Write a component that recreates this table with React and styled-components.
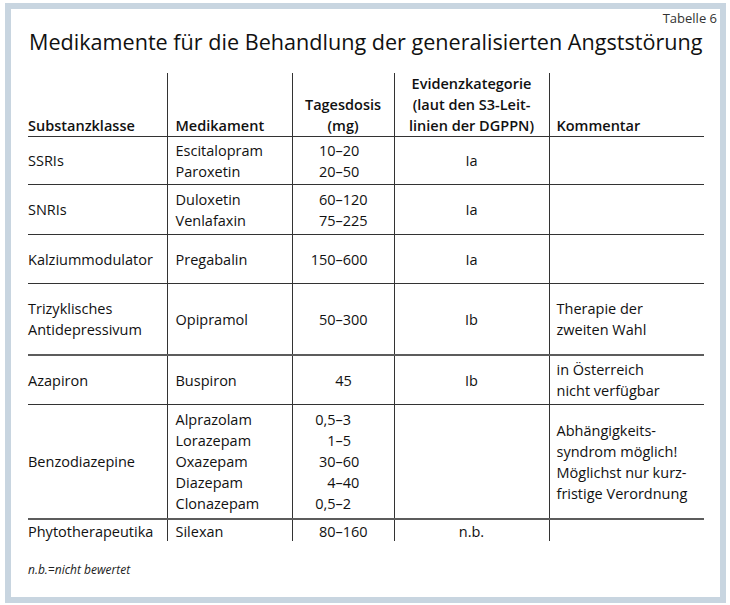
import React from "react"
import styled, { createGlobalStyle } from "styled-components"

const GlobalStyle = createGlobalStyle`
    html, body {
        margin: 0;
        padding: 0;
        background: #fff;
    }
    body {
        font-family: "Open Sans", "Noto Sans", sans-serif;
        color: #111;
    }
`

const Frame = styled.div`
    box-sizing: border-box;
    width: 721px;
    height: 600px;
    margin: 3px 4px 2px 5px;
    border: 6px solid #c8d5e0;
    padding: 1px 3px 0 17px;
    display: flex;
    flex-direction: column;
`

const Caption = styled.div`
    align-self: flex-end;
    font-size: 13px;
    line-height: 16px;
    color: #333;
`

const Title = styled.h1`
    margin: 5px 0 0 1px;
    font-size: 21.6px;
    line-height: 22px;
    font-weight: 400;
    color: #111;
`

const Table = styled.table`
    margin-top: 20px;
    width: 676px;
    border-collapse: collapse;
    table-layout: fixed;
    font-size: 14.5px;
`

const Col = styled.col`
    width: ${p => p.w}px;
`

const Th = styled.th`
    box-sizing: border-box;
    height: 63px;
    padding: 0 0 0 ${p => p.pad || 0}px;
    vertical-align: bottom;
    text-align: ${p => p.center ? "center" : "left"};
    font-weight: 600;
    line-height: 21px;
    border-left: ${p => p.first ? "none" : "1px solid #333"};
`

const Row = styled.tr`
    border-top: ${p => p.thick ? "2px solid #5c5c5c" : "1px solid #333"};
`

const Td = styled.td`
    height: ${p => p.h}px;
    padding: ${p => p.top ? "3px" : "0"} 0 0 ${p => p.pad || 0}px;
    vertical-align: ${p => p.top ? "top" : "middle"};
    text-align: ${p => p.center ? "center" : "left"};
    line-height: ${p => p.top ? 18 : 21}px;
    border-left: ${p => p.first ? "none" : "1px solid #333"};
`

const Line = styled.div`
    white-space: nowrap;
    text-align: ${p => p.center ? "center" : "inherit"};
`

const DoseLine = styled.div`
    display: grid;
    grid-template-columns: 42px auto 1fr;
    white-space: nowrap;
`

const Low = styled.span`
    text-align: right;
`

const Footnote = styled.div`
    margin-top: 21px;
    font-size: 12px;
    line-height: 16px;
    font-style: italic;
    color: #222;
`

const rows = [
    { cls: ["SSRIs"], meds: ["Escitalopram", "Paroxetin"], dose: [["10", "20"], ["20", "50"]], ev: "Ia", com: [], h: 47 },
    { cls: ["SNRIs"], meds: ["Duloxetin", "Venlafaxin"], dose: [["60", "120"], ["75", "225"]], ev: "Ia", com: [], h: 49 },
    { cls: ["Kalziummodulator"], meds: ["Pregabalin"], dose: [["150", "600"]], ev: "Ia", com: [], h: 48 },
    { cls: ["Trizyklisches", "Antidepressivum"], meds: ["Opipramol"], dose: [["50", "300"]], ev: "Ib", com: ["Therapie der", "zweiten Wahl"], h: 70 },
    { cls: ["Azapiron"], meds: ["Buspiron"], dose: "45", ev: "Ib", com: ["in Österreich", "nicht verfügbar"], h: 48, thick: true },
    {
        cls: ["Benzodiazepine"],
        meds: ["Alprazolam", "Lorazepam", "Oxazepam", "Diazepam", "Clonazepam"],
        dose: [["0,5", "3"], ["1", "5"], ["30", "60"], ["4", "40"], ["0,5", "2"]],
        ev: "",
        com: ["Abhängigkeits-", "syndrom möglich!", "Möglichst nur kurz-", "fristige Verordnung"],
        h: 113
    },
    { cls: ["Phytotherapeutika"], meds: ["Silexan"], dose: [["80", "160"]], ev: "n.b.", com: [], h: 18, thick: true, top: true },
]

const Lines = ({ items }) => items.map(t => <Line key={t}>{t}</Line>)

const Dose = ({ dose }) =>
    typeof dose === "string"
        ? <Line center>{dose}</Line>
        : dose.map(([lo, hi], i) =>
            <DoseLine key={i}>
                <Low>{lo}</Low>
                <span>–</span>
                <span>{hi}</span>
            </DoseLine>
        )

const App = () =>
    <>
        <GlobalStyle />
        <Frame>
            <Caption>Tabelle 6</Caption>
            <Title>Medikamente für die Behandlung der generalisierten Angststörung</Title>
            <Table>
                <colgroup>
                    <Col w={139} />
                    <Col w={125} />
                    <Col w={102} />
                    <Col w={155} />
                    <Col w={155} />
                </colgroup>
                <thead>
                    <tr>
                        <Th first>Substanzklasse</Th>
                        <Th pad={8}>Medikament</Th>
                        <Th center>Tagesdosis<br />(mg)</Th>
                        <Th center>Evidenzkategorie<br />(laut den S3-Leit-<br />linien der DGPPN)</Th>
                        <Th pad={7}>Kommentar</Th>
                    </tr>
                </thead>
                <tbody>
                    {rows.map(r =>
                        <Row key={r.cls[0]} thick={r.thick}>
                            <Td first h={r.h} top={r.top}><Lines items={r.cls} /></Td>
                            <Td pad={8} h={r.h} top={r.top}><Lines items={r.meds} /></Td>
                            <Td pad={1} h={r.h} top={r.top}><Dose dose={r.dose} /></Td>
                            <Td center h={r.h} top={r.top}>{r.ev}</Td>
                            <Td pad={7} h={r.h} top={r.top}><Lines items={r.com} /></Td>
                        </Row>
                    )}
                </tbody>
            </Table>
            <Footnote>n.b.=nicht bewertet</Footnote>
        </Frame>
    </>

export default App
